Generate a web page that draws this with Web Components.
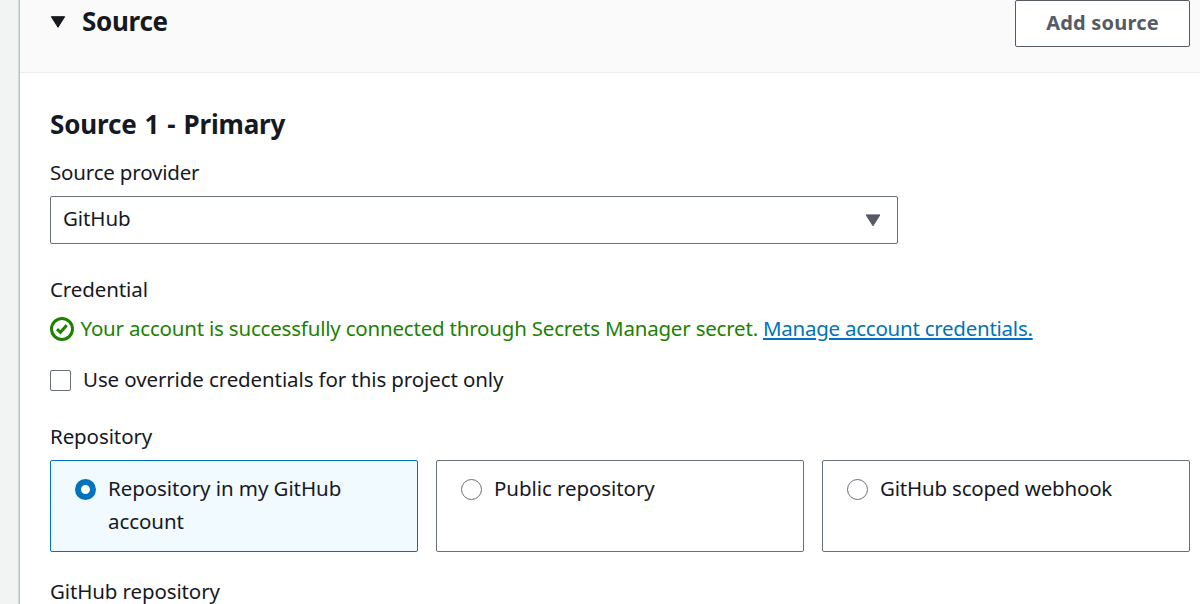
<!DOCTYPE html>
<html lang="en">
<head>
<meta charset="utf-8">
<title>Source</title>
<style>
  html, body { margin: 0; height: 604px; overflow: hidden; background: #fff; }
  body { font: 20.5px/33px "Noto Sans", "Open Sans", sans-serif; color: #16191f; }
</style>
</head>
<body>
<source-panel></source-panel>
<script>
const define = (name, html) => customElements.define(name, class extends HTMLElement {
  constructor() {
    super();
    this.attachShadow({ mode: "open" }).innerHTML = html;
  }
});

define("action-button", `
  <style>
    :host { display: block; }
    button { display: block; box-sizing: border-box; width: 175px; height: 47px; margin: 0; padding: 0 0 2px; border: 1px solid #545b64; border-radius: 2px;
      background: #fff; color: #545b64; font: 700 20px/43px "Noto Sans", sans-serif; letter-spacing: var(--ls, 0); white-space: nowrap; }
  </style>
  <button><slot></slot></button>`);

define("section-header", `
  <style>
    :host { display: flex; box-sizing: border-box; height: 73px; padding: 0 10px 0 30px; background: #fafafa; border-bottom: 1px solid #eaeded; }
    svg { display: block; width: 16px; height: 13px; margin: 16px 16px 0 0; }
    h2 { margin: 5px auto 0 0; font: 700 26px/33px "Noto Sans", sans-serif; letter-spacing: -.3px; }
  </style>
  <svg viewBox="0 0 16 13"><path d="M1.3 .7H14.7L8 11.3Z" fill="#16191f" stroke="#16191f" stroke-width="1" stroke-linejoin="round"/></svg>
  <h2><slot></slot></h2>
  <slot name="actions"></slot>`);

define("field-label", `
  <style>
    :host { display: block; height: 33px; white-space: nowrap; }
    span { display: block; padding-top: 1px; letter-spacing: var(--ls, 0); }
  </style>
  <span><slot></slot></span>`);

define("select-box", `
  <style>
    :host { display: flex; box-sizing: border-box; width: 848px; height: 48px; padding: 5px 16px 0 12px; border: 1px solid #687078; border-radius: 2px; background: #fff; }
    span { flex: 1; letter-spacing: var(--ls, 0); }
    svg { display: block; width: 16px; height: 13px; margin-top: 12px; }
  </style>
  <span><slot></slot></span>
  <svg viewBox="0 0 16 13"><path d="M1.1 .9H14.9L8 11.8Z" fill="#545b64" stroke="#545b64" stroke-width="1" stroke-linejoin="round"/></svg>`);

define("status-line", `
  <style>
    :host { display: flex; height: 33px; color: #1d8102; white-space: nowrap; }
    svg { display: block; width: 24px; height: 24px; margin: 6px 6.5px 0 0; }
    .text { padding-top: 1px; letter-spacing: var(--ls, 0); margin-right: 5px; }
  </style>
  <svg viewBox="0 0 24 24" fill="none" stroke="#1d8102" stroke-width="3"><circle cx="12" cy="12" r="10.5"/><path d="M7 12.2L10.4 15.3L16.7 8.3"/></svg>
  <span class="text"><slot></slot></span><slot name="link"></slot>`);

define("text-link", `
  <style>
    :host { display: block; padding-top: 1px; }
    a { color: #0073bb; text-decoration: underline; text-decoration-thickness: 2px; text-underline-offset: 2px; letter-spacing: var(--link-ls, 0); }
  </style>
  <a href="#"><slot></slot></a>`);

define("check-box", `
  <style>
    :host { display: flex; height: 33px; white-space: nowrap; }
    i { box-sizing: border-box; width: 21px; height: 21px; margin: 8px 12px 0 0; border: 1px solid #687078; border-radius: 2px; background: #fff; }
    span { padding-top: 1px; letter-spacing: var(--ls, 0); }
  </style>
  <i></i><span><slot></slot></span>`);

define("radio-tile", `
  <style>
    :host { display: flex; box-sizing: border-box; height: 92px; padding: 11px 56px 0 24px; border: 1px solid #687078; border-radius: 2px; background: #fff; }
    :host([checked]) { background: #f1faff; border-color: #0073bb; }
    i { flex: none; box-sizing: border-box; width: 21px; height: 21px; margin: 7px 12px 0 0; border: 1px solid #687078; border-radius: 50%; background: #fff; }
    :host([checked]) i { border: 6px solid #0073bb; }
    span { letter-spacing: var(--ls, 0); }
  </style>
  <i></i><span><slot></slot></span>`);

define("source-panel", `
  <style>
    :host { display: flex; height: 604px; overflow: hidden; }
    .gutter { flex: none; width: 18px; background: #f2f3f3; border-right: 1px solid #d5dbdb; }
    main { flex: 1; min-width: 0; border-left: 1px solid #bcc3c3; background: #fff; }
    .body { display: flex; flex-direction: column; padding: 35px 10px 0 30px; }
    h3 { margin: 0 0 14px; font: 700 26px/33px "Noto Sans", sans-serif; letter-spacing: -.16px; word-spacing: 1.4px; }
    select-box { margin: 8px 0 28px; }
    status-line { margin: 6px 0 18px; }
    check-box { margin-bottom: 24px; }
    .tiles { display: grid; grid-template-columns: repeat(3, 1fr); gap: 18px; margin: 8px 0 22px; }
  </style>
  <div class="gutter"></div>
  <main>
    <section-header>Source<action-button slot="actions" style="--ls:.2px">Add source</action-button></section-header>
    <div class="body">
      <h3>Source 1 - Primary</h3>
      <field-label style="--ls:-.18px">Source provider</field-label>
      <select-box style="--ls:-.1px">GitHub</select-box>
      <field-label style="--ls:-.1px">Credential</field-label>
      <status-line style="--ls:-.2px">Your account is successfully connected through Secrets Manager secret.<text-link slot="link" style="--link-ls:-.25px">Manage account credentials.</text-link></status-line>
      <check-box style="--ls:-.11px">Use override credentials for this project only</check-box>
      <field-label style="--ls:-.1px">Repository</field-label>
      <div class="tiles">
        <radio-tile checked style="--ls:-.07px">Repository in my GitHub account</radio-tile>
        <radio-tile style="--ls:-.07px">Public repository</radio-tile>
        <radio-tile style="--ls:-.2px">GitHub scoped webhook</radio-tile>
      </div>
      <field-label style="--ls:-.12px">GitHub repository</field-label>
    </div>
  </main>`);
</script>
</body>
</html>
